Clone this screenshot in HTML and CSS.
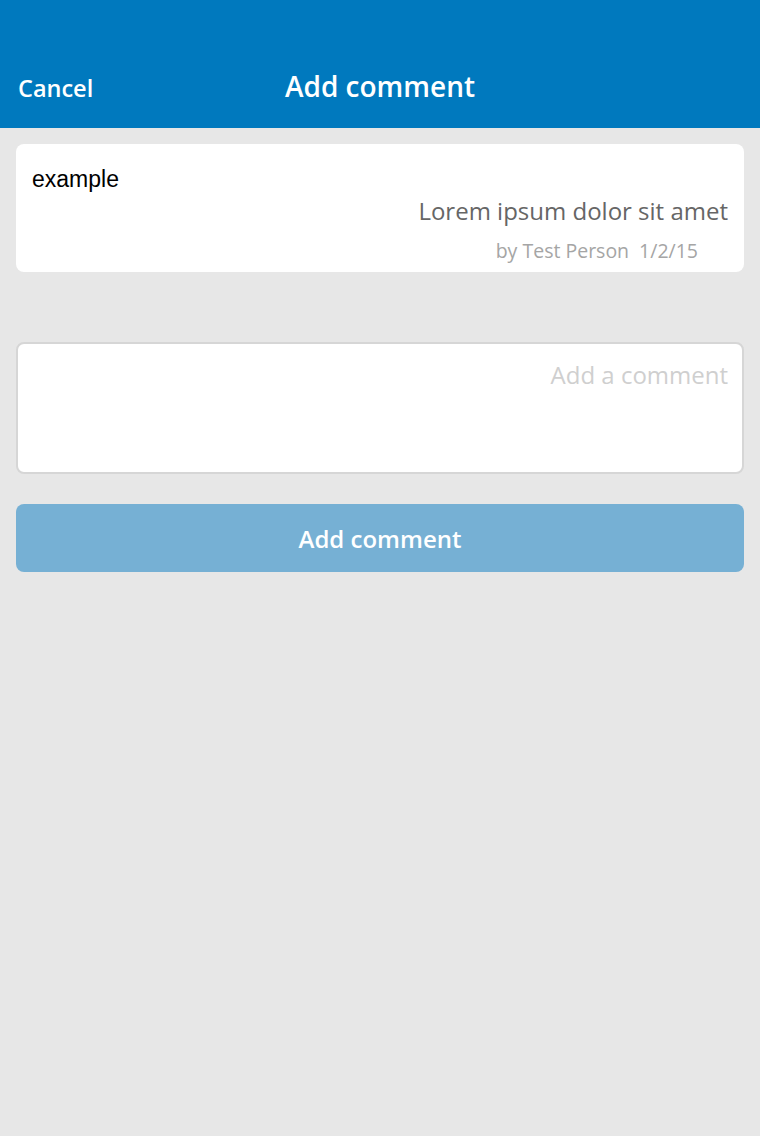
FILE: index.html
```html
<!DOCTYPE html>
<html>
<head>
<meta charset="utf-8">
<link rel="stylesheet" href="styles.css">
</head>
<body>
<header class="topbar">
  <span class="cancel">Cancel</span>
  <h1 class="title">Add comment</h1>
</header>
<main class="content">
  <section class="card">
    <div class="card-label">example</div>
    <div class="card-text">Lorem ipsum dolor sit amet</div>
    <div class="card-meta"><span>by Test Person</span><span>1/2/15</span></div>
  </section>
  <div class="comment-box">
    <div class="placeholder">Add a comment</div>
  </div>
  <button class="submit">Add comment</button>
</main>
</body>
</html>
```
FILE: styles.css
```css
html, body {
  margin: 0;
  padding: 0;
  background: #e7e7e7;
  font-family: "Open Sans", "Liberation Sans", sans-serif;
}
.topbar {
  height: 128px;
  background: #0079be;
  color: #fff;
  display: flex;
  align-items: flex-end;
  padding: 0 18px 25px;
  box-sizing: border-box;
  position: relative;
}
.cancel {
  font-size: 23.5px;
  font-weight: 600;
  line-height: 30px;
}
.title {
  position: absolute;
  left: 0;
  right: 0;
  bottom: 24px;
  margin: 0;
  text-align: center;
  font-size: 28px;
  font-weight: 600;
  line-height: 36px;
  pointer-events: none;
}
.content {
  padding: 16px;
  display: flex;
  flex-direction: column;
}
.card {
  background: #fff;
  border-radius: 8px;
  height: 128px;
  box-sizing: border-box;
  padding: 21px 16px 0;
  display: flex;
  flex-direction: column;
}
.card-label {
  font-family: "Liberation Sans", Arial, sans-serif;
  font-size: 23px;
  line-height: 28px;
  color: #000;
}
.card-text {
  text-align: right;
  font-size: 24px;
  line-height: 32px;
  color: #666;
  margin-top: 2px;
}
.card-meta {
  display: flex;
  justify-content: flex-end;
  gap: 10px;
  font-size: 19.5px;
  line-height: 26px;
  color: #a5a5a5;
  padding-right: 30px;
  margin-top: 11px;
}
.comment-box {
  margin-top: 70px;
  height: 132px;
  background: #fff;
  border: 2px solid #d6d6d6;
  border-radius: 8px;
  box-sizing: border-box;
  padding: 14px 14px 0;
}
.placeholder {
  text-align: right;
  font-size: 24px;
  line-height: 34px;
  color: #cfcfcf;
}
.submit {
  margin-top: 30px;
  height: 68px;
  border: none;
  border-radius: 8px;
  background: #76b0d4;
  color: #fff;
  font-family: "Open Sans", sans-serif;
  font-size: 24px;
  font-weight: 600;
  padding: 0;
}
```
